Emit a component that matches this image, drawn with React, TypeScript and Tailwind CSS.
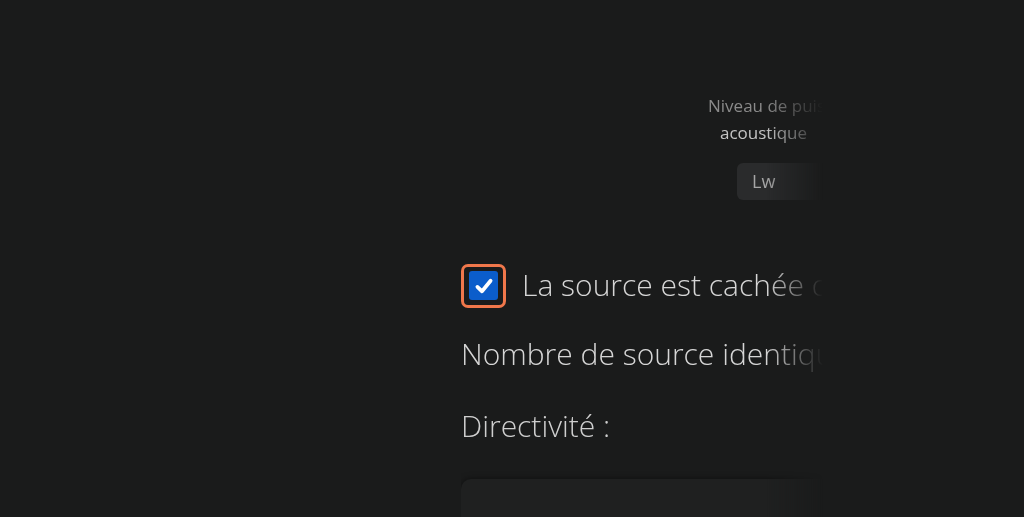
import React from "react";

export default function App() {
  const font = { fontFamily: '"Open Sans", "Noto Sans", sans-serif' };
  return (
    <div
      className="w-[1024px] h-[517px] overflow-hidden bg-[#1a1b1b] text-[#d2d2d2]"
      style={font}
    >
      <div className="ml-[461px] w-[380px] [mask-image:linear-gradient(to_right,black_0px,black_305px,transparent_362px)]">
        <div className="pt-[92px] text-[17px] leading-[27px] whitespace-nowrap">
          <div className="ml-[247px] text-[#8a8a8a]">Niveau de puissance</div>
          <div className="ml-[259px] text-[#c4c4c4]">acoustique</div>
        </div>
        <div className="mt-[17px] ml-[276px] w-[110px] h-[37px] rounded-md bg-[#2a2b2c] flex items-center px-[15px] text-[18px] text-[#a6a6a6]">
          Lw
        </div>
        <div className="mt-[63px] flex items-center gap-[16px]">
          <div className="shrink-0 w-[45px] h-[44px] rounded-[7px] border-[3px] border-[#f0774b] flex items-center justify-center">
            <div className="w-[29px] h-[29px] rounded-[3px] bg-[#0b5dcb] flex items-center justify-center">
              <svg width="22" height="22" viewBox="0 0 20 20">
                <path
                  d="M4 10.8 L8.2 14.8 L16 5.2"
                  fill="none"
                  stroke="white"
                  strokeWidth="3.4"
                  strokeLinecap="round"
                  strokeLinejoin="round"
                />
              </svg>
            </div>
          </div>
          <span className="text-[30px] font-light whitespace-nowrap text-[#d6d6d6] -translate-y-[1px]">
            La source est cachée derrière un écran
          </span>
        </div>
        <div className="mt-[24px] text-[30px] font-light whitespace-nowrap text-[#d6d6d6] leading-[44px]">
          Nombre de source identiques :
        </div>
        <div className="mt-[28px] text-[30px] font-light whitespace-nowrap text-[#cfcfcf] leading-[44px]">
          Directivité :
        </div>
        <div className="mt-[31px] h-[60px] w-[380px] rounded-tl-[10px] bg-[#1f2020] shadow-[0_0_6px_rgba(0,0,0,0.5)]" />
      </div>
    </div>
  );
}
